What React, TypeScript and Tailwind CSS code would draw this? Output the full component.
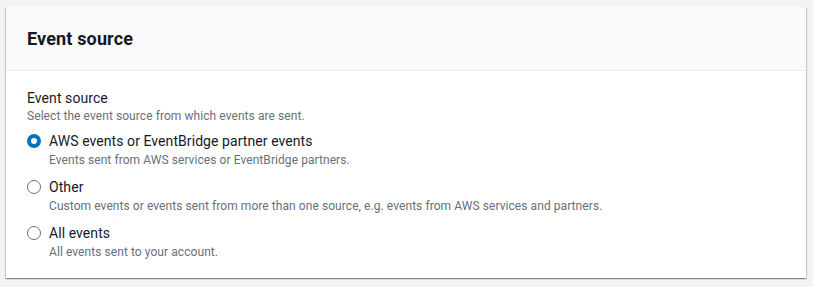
const options = [
  {
    id: "aws",
    label: "AWS events or EventBridge partner events",
    description: "Events sent from AWS services or EventBridge partners.",
  },
  {
    id: "other",
    label: "Other",
    description:
      "Custom events or events sent from more than one source, e.g. events from AWS services and partners.",
  },
  {
    id: "all",
    label: "All events",
    description: "All events sent to your account.",
  },
];

function Radio({ checked }: { checked: boolean }) {
  return checked ? (
    <span className="mt-[4px] box-border block h-[14px] w-[14px] shrink-0 rounded-full border-[4px] border-[#0073bb] bg-white" />
  ) : (
    <span className="mt-[4px] box-border block h-[14px] w-[14px] shrink-0 rounded-full border border-[#687078] bg-white" />
  );
}

export default function App() {
  const selected = "aws";

  return (
    <div
      className="min-h-[287px] w-[813px] bg-[#f2f3f3] pl-[6px] pr-[7px] pt-[7px] text-[#16191f]"
      style={{ fontFamily: "Roboto, 'Noto Sans', sans-serif" }}
    >
      <div className="w-[800px] bg-white shadow-[0_1px_1px_0_rgba(0,28,36,0.3),1px_1px_1px_0_rgba(0,28,36,0.15),-1px_1px_1px_0_rgba(0,28,36,0.15)]">
        {/* Header */}
        <div className="flex h-[64px] items-center border-b border-[#eaeded] bg-[#fafafa] px-[21px]">
          <h2 className="text-[18px] font-bold leading-[22px] tracking-[0.15px]">Event source</h2>
        </div>

        {/* Body */}
        <div className="px-[21px] pb-[18px] pt-[17px] tracking-[0.07px]">
          <div className="text-[14px] leading-[20px]">Event source</div>
          <div className="text-[12px] leading-[16px] text-[#687078]">
            Select the event source from which events are sent.
          </div>

          <div className="mt-[6px] flex flex-col gap-[8px]">
            {options.map((o) => (
              <label key={o.id} className="flex gap-[8px]">
                <Radio checked={o.id === selected} />
                <div>
                  <div className="text-[14px] leading-[22px]">{o.label}</div>
                  <div className="text-[12px] leading-[16px] text-[#687078]">{o.description}</div>
                </div>
              </label>
            ))}
          </div>
        </div>
      </div>
    </div>
  );
}
